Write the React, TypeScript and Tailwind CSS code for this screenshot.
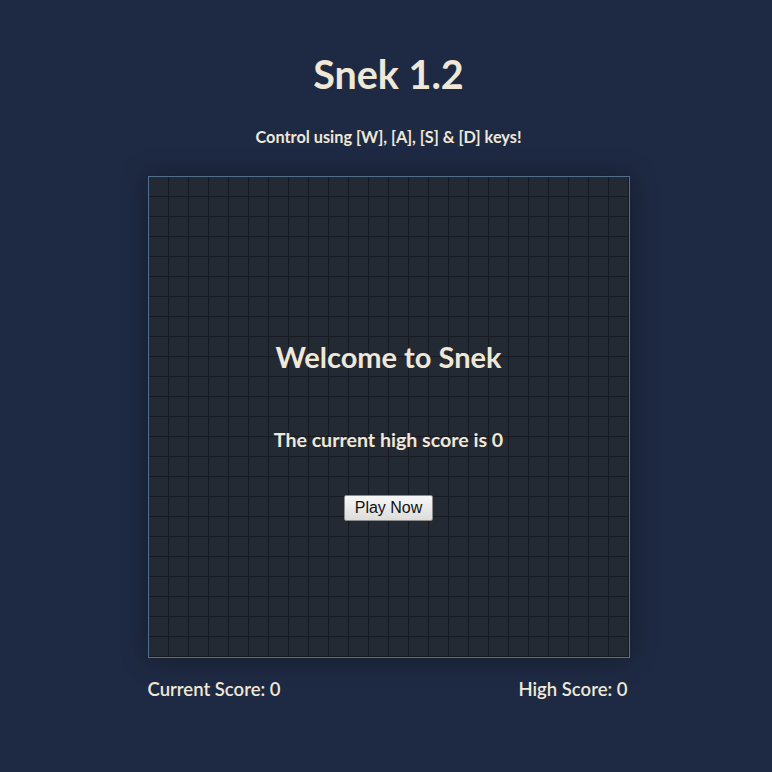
import React from "react";

const cells = Array.from({ length: 24 * 24 });

export default function App() {
  return (
    <div className="min-h-screen w-full bg-[#1e2a43] text-[#efe8d8] font-['Lato',sans-serif] flex flex-col items-center pt-[51px] pl-[5px]">
      <h1 className="text-[39.5px] leading-[46px] font-bold">Snek 1.2</h1>
      <p className="mt-[30px] text-[16.3px] leading-[20px] font-bold">
        Control using [W], [A], [S] &amp; [D] keys!
      </p>

      {/* Game board */}
      <div className="mt-[29px] relative border border-[#50708f] shadow-[0_0_24px_rgba(0,0,0,0.35)]">
        <div className="grid grid-cols-[repeat(24,19px)] gap-px bg-[#171a21] pr-px pb-px">
          {cells.map((_, i) => (
            <div key={i} className="h-[19px] bg-[#242a33]" />
          ))}
        </div>

        <div className="absolute inset-0 flex flex-col items-center pt-[162px]">
          <h2 className="text-[29px] leading-[36px] font-bold">Welcome to Snek</h2>
          <p className="mt-[53px] text-[19.6px] leading-[24px] font-bold">The current high score is 0</p>
          <button className="mt-[43px] h-[26px] px-[10px] border border-[#8c8c8c] rounded-[2px] bg-gradient-to-b from-[#f8f8f8] to-[#dcdcdc] text-[#111] text-[16px] leading-[20px] font-['Liberation_Sans',sans-serif]">
            Play Now
          </button>
        </div>
      </div>

      <div className="mt-[19px] w-[482px] pr-[2px] flex justify-between text-[18.5px] leading-[24px] font-semibold">
        <span>Current Score: 0</span>
        <span>High Score: 0</span>
      </div>
    </div>
  );
}
